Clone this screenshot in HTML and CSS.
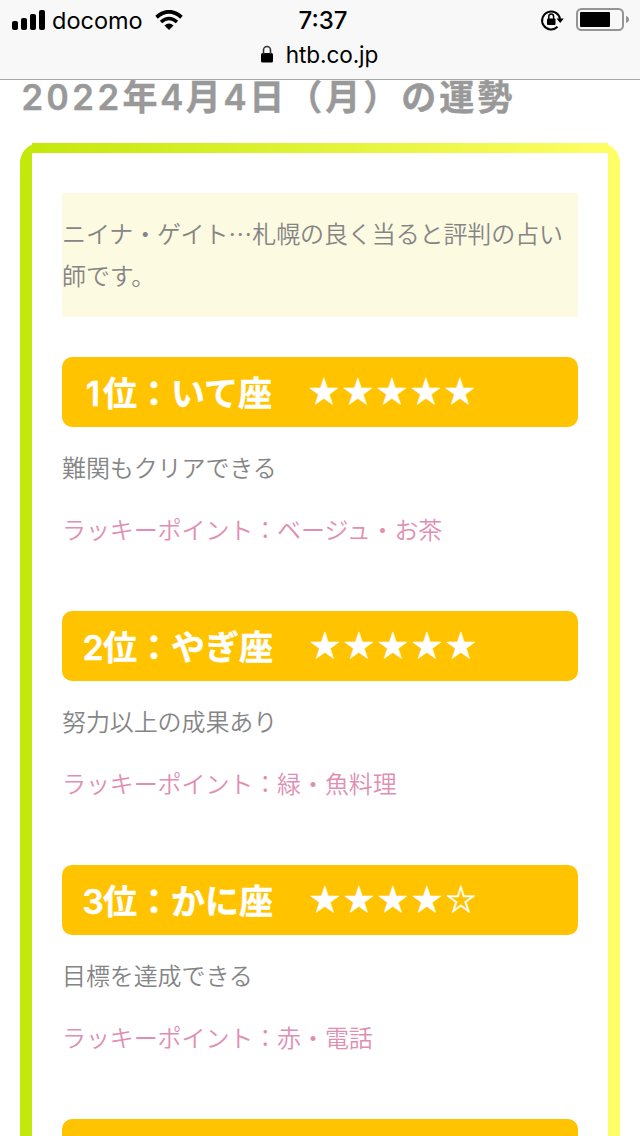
FILE: index.html
```html
<!DOCTYPE html>
<html lang="ja">
<head>
    <meta charset="UTF-8" />
    <meta name="viewport" content="width=device-width, initial-scale=1.0" />
    <title>今日の運勢</title>
    <link rel="stylesheet" href="styles.css">
</head>
<body>
<header class="browser-bar">
    <div class="status">
        <div class="status-left">
            <svg class="signal" width="34" height="20" viewBox="0 0 34 20">
                <rect x="0" y="11" width="6" height="9" rx="2" />
                <rect x="9" y="8" width="6" height="12" rx="2" />
                <rect x="18" y="4" width="6" height="16" rx="2" />
                <rect x="27" y="0" width="6" height="20" rx="2" />
            </svg>
            <span class="carrier">docomo</span>
            <svg class="wifi" width="28" height="20" viewBox="0 0 28 20">
                <path d="M1.5 7.2Q14 -3.6 26.5 7.2" stroke-width="3.8" />
                <path d="M6 12Q14 5 22 12" stroke-width="3.6" />
                <path class="fill" d="M9.4 15.6Q14 11.6 18.6 15.6L14 20Z" />
            </svg>
        </div>
        <div class="time">7:37</div>
        <div class="status-right">
            <svg width="24" height="22" viewBox="0 0 24 22">
                <path d="M17.5 17.8A9 9 0 1 1 20 10" fill="none" stroke="#000" stroke-width="2" />
                <path d="M16.5 9.5H23.8L20.2 14Z" />
                <rect x="7" y="9.5" width="8.5" height="6.5" rx="1" />
                <path d="M8.8 10V7.5a2.4 2.4 0 0 1 4.8 0V10" fill="none" stroke="#000" stroke-width="1.5" />
            </svg>
            <svg width="54" height="24" viewBox="0 0 54 24">
                <rect x="1" y="1" width="46" height="21" rx="4.5" fill="none" stroke="#949494" stroke-width="2" />
                <rect x="4" y="4" width="30" height="15" rx="1" />
                <path d="M50 8Q53 9 53 11.5T50 15Z" fill="#949494" />
            </svg>
        </div>
    </div>
    <div class="address">
        <svg width="12" height="18" viewBox="0 0 12 18">
            <rect x="0" y="8" width="12" height="9.5" rx="1.5" />
            <path d="M2.5 9V5a3.5 3.5 0 0 1 7 0V9" fill="none" stroke="#333" stroke-width="1.6" />
        </svg>
        <span>htb.co.jp</span>
    </div>
</header>

<main>
    <h1><span class="num">2022</span>年<span class="num">4</span>月<span class="num">4</span>日（月）の運勢</h1>
    <div class="frame">
        <div class="frame-inner">
            <p class="intro">ニイナ・ゲイト…札幌の良く当ると評判の占い師です。</p>

            <section class="rank">
                <h2><span class="no">1</span>位：いて座　<span class="stars">★★★★★</span></h2>
                <p>難関もクリアできる</p>
                <p class="lucky">ラッキーポイント：ベージュ・お茶</p>
            </section>

            <section class="rank">
                <h2><span class="no">2</span>位：やぎ座　<span class="stars">★★★★★</span></h2>
                <p>努力以上の成果あり</p>
                <p class="lucky">ラッキーポイント：緑・魚料理</p>
            </section>

            <section class="rank">
                <h2><span class="no">3</span>位：かに座　<span class="stars">★★★★☆</span></h2>
                <p>目標を達成できる</p>
                <p class="lucky">ラッキーポイント：赤・電話</p>
            </section>

            <section class="rank">
                <h2></h2>
            </section>
        </div>
    </div>
</main>
</body>
</html>
```

FILE: styles.css
```css
* {
    box-sizing: border-box;
}
body {
    margin: 0;
    height: 1136px;
    overflow: hidden;
    background: #fff;
    color: #858585;
    font-family: "Noto Sans CJK JP", sans-serif;
}
h1, h2, p {
    margin: 0;
}

/* browser bar */
.browser-bar {
    position: relative;
    z-index: 1;
    height: 80px;
    background: #f8f8f8;
    border-bottom: 1px solid #a8a8a8;
    color: #000;
    font-family: Inter, "Liberation Sans", sans-serif;
}
.status {
    display: grid;
    grid-template-columns: 1fr auto 1fr;
    align-items: center;
    height: 40px;
    padding: 0 10px 0 12px;
}
.status-left, .status-right {
    display: flex;
    align-items: center;
}
.status-right {
    justify-content: flex-end;
    gap: 12px;
}
.carrier {
    margin: 2px 12px 0 6px;
    font-size: 23.5px;
    line-height: 38px;
}
.wifi path {
    fill: none;
    stroke: #000;
}
.wifi .fill {
    fill: #000;
    stroke: none;
}
.time {
    margin: 1px -2px 0 2px;
    font-size: 24px;
    font-weight: 550;
}
.address {
    display: flex;
    justify-content: center;
    align-items: center;
    gap: 13px;
    height: 28px;
    padding-right: 1px;
    font-size: 22.6px;
    letter-spacing: -0.1px;
}

/* fortune */
main {
    padding: 0 20px;
}
h1 {
    height: 70px;
    margin-top: -7px;
    padding-left: 1px;
    font-size: 35px;
    line-height: 43px;
    letter-spacing: 3px;
    color: #999;
    white-space: nowrap;
    -webkit-text-stroke: 0.4px #999;
}
.num, .no {
    display: inline-block;
    font-family: Inter, "Liberation Sans", sans-serif;
    font-weight: 600;
    font-variant-numeric: tabular-nums;
    line-height: 1;
}
.num {
    letter-spacing: 2.7px;
}
.frame {
    position: relative;
    height: 993px;
    padding: 10px 12px 0;
    border-radius: 20px 20px 0 0;
    background: linear-gradient(to right, #c3e80b, #ffff66);
}
.frame::before {
    content: "";
    position: absolute;
    top: 0;
    left: 12px;
    right: 12px;
    height: 10px;
    background: linear-gradient(to right, #c4e80b, #fefe64);
}
.frame-inner {
    height: 100%;
    padding: 40px 30px 0;
    overflow: hidden;
    background: #fff;
}
p {
    height: 42px;
    font-size: 24px;
    font-weight: 350;
    line-height: 40px;
    letter-spacing: -0.1px;
}
.intro {
    height: 124px;
    margin-bottom: 40px;
    padding: 19px 0;
    line-height: 42px;
    background: #fcfae1;
}
.rank {
    margin-bottom: 60px;
}
.rank p {
    margin-top: 20px;
}
.rank .lucky {
    color: #e08fb3;
}
h2 {
    height: 70px;
    padding-left: 21px;
    border-radius: 10px;
    background: #ffc300;
    color: #fff;
    font-size: 34px;
    line-height: 69px;
    white-space: nowrap;
    -webkit-text-stroke: 0.4px #fff;
}
.no {
    display: inline-flex;
    justify-content: center;
    width: 20px;
    font-variant-numeric: normal;
}
.stars {
    margin-left: 3px;
    font-size: 30px;
    letter-spacing: 4px;
    vertical-align: 4px;
    line-height: 1;
}
```
